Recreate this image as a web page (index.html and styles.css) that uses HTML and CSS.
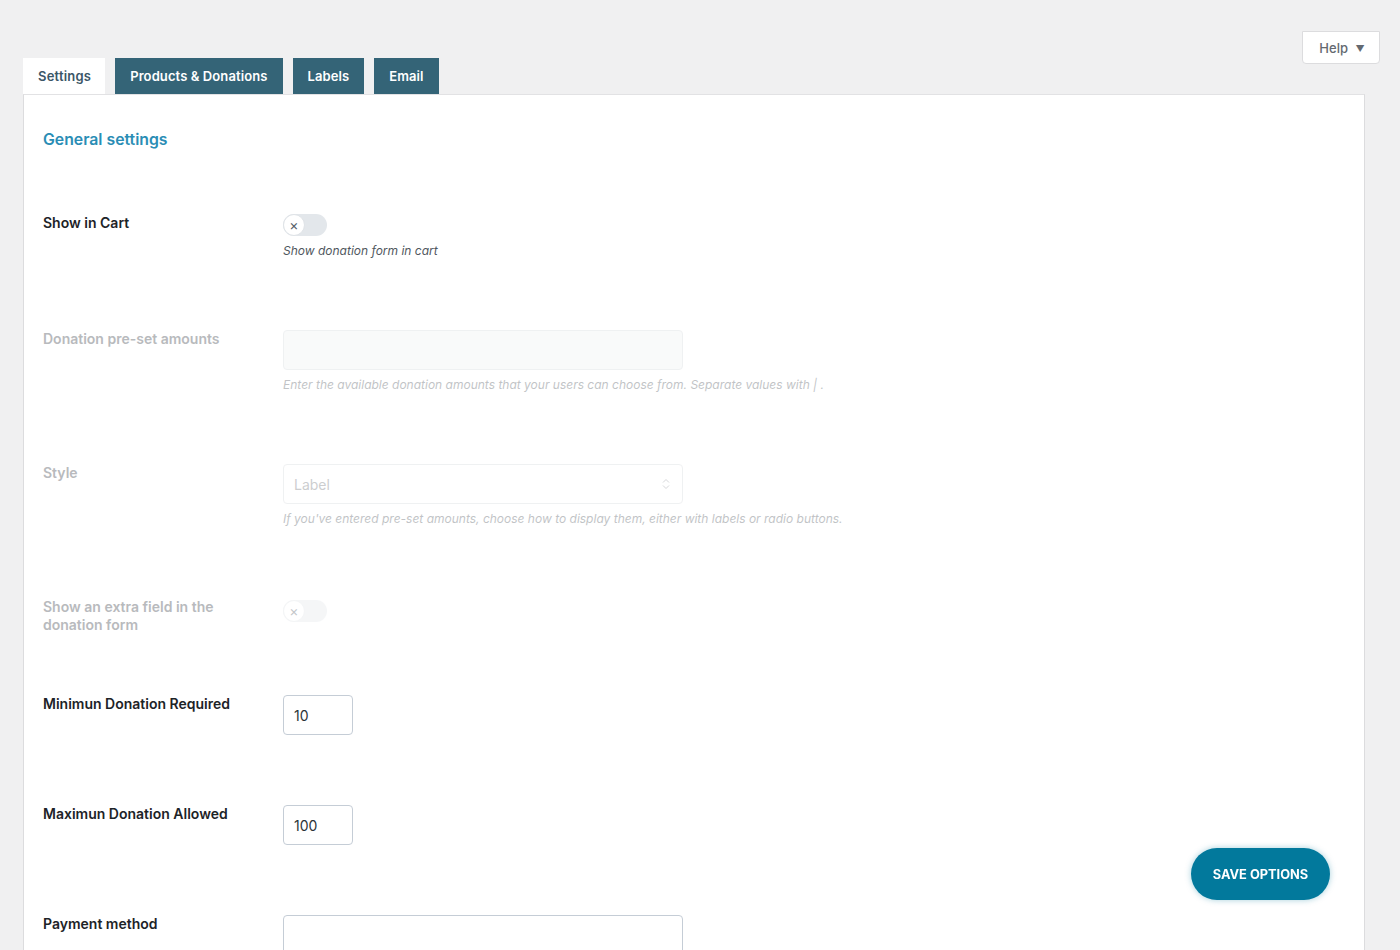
FILE: index.html
```html
<!DOCTYPE html>
<html lang="en">
<head>
    <meta charset="UTF-8">
    <meta name="viewport" content="width=device-width, initial-scale=1.0">
    <title>Donation Settings</title>
    <link rel="stylesheet" href="styles.css">
</head>
<body>
    <div class="topbar">
        <button class="help-btn">Help <span class="caret">&#9660;</span></button>
    </div>

    <div class="wrap">
        <nav class="tabs">
            <a class="tab active" href="#">Settings</a>
            <a class="tab" href="#">Products &amp; Donations</a>
            <a class="tab" href="#">Labels</a>
            <a class="tab" href="#">Email</a>
        </nav>

        <div class="panel">
            <h2 class="section-title">General settings</h2>

            <div class="row">
                <div class="label">Show in Cart</div>
                <div class="field">
                    <span class="toggle"><span class="knob">&times;</span></span>
                    <p class="desc">Show donation form in cart</p>
                </div>
            </div>

            <div class="row disabled">
                <div class="label">Donation pre-set amounts</div>
                <div class="field">
                    <input class="input wide" type="text" disabled>
                    <p class="desc">Enter the available donation amounts that your users can choose from. Separate values with | .</p>
                </div>
            </div>

            <div class="row disabled">
                <div class="label">Style</div>
                <div class="field">
                    <div class="select wide">
                        <span>Label</span>
                        <svg width="8" height="12" viewBox="0 0 8 12"><path d="M1 4.5 4 1.5 7 4.5M1 7.5 4 10.5 7 7.5" fill="none" stroke="#8c8f94" stroke-width="1"/></svg>
                    </div>
                    <p class="desc">If you've entered pre-set amounts, choose how to display them, either with labels or radio buttons.</p>
                </div>
            </div>

            <div class="row disabled tight">
                <div class="label narrow">Show an extra field in the donation form</div>
                <div class="field">
                    <span class="toggle"><span class="knob">&times;</span></span>
                </div>
            </div>

            <div class="row">
                <div class="label">Minimun Donation Required</div>
                <div class="field">
                    <input class="input small" type="text" value="10">
                </div>
            </div>

            <div class="row">
                <div class="label">Maximun Donation Allowed</div>
                <div class="field">
                    <input class="input small" type="text" value="100">
                </div>
            </div>

            <div class="row">
                <div class="label">Payment method</div>
                <div class="field">
                    <div class="input wide tall"></div>
                </div>
            </div>
        </div>
    </div>

    <button class="save-btn">SAVE OPTIONS</button>
</body>
</html>
```

FILE: styles.css
```css
body {
    margin: 0;
    background: #f0f0f1;
    font-family: 'Inter', 'Liberation Sans', sans-serif;
    color: #1d2327;
}

.topbar {
    display: flex;
    justify-content: flex-end;
    padding: 31px 20px 0 0;
    height: 27px;
}

.help-btn {
    height: 33px;
    width: 78px;
    background: #fff;
    border: 1px solid #dcdcde;
    border-radius: 0 0 4px 4px;
    font-family: inherit;
    font-size: 13px;
    font-weight: 500;
    color: #646970;
    padding: 0 0 0 2px;
    cursor: pointer;
}

.help-btn .caret {
    font-size: 9px;
    margin-left: 4px;
    position: relative;
    top: -1px;
}

.wrap {
    margin: 0 35px 0 23px;
}

/* tabs */
.tabs {
    display: flex;
    gap: 10px;
}

.tab {
    display: block;
    height: 36px;
    line-height: 36px;
    padding: 0 15px;
    font-size: 13px;
    font-weight: 600;
    letter-spacing: 0.1px;
    text-decoration: none;
    color: #fff;
    background: #346477;
}

.tab.active {
    background: #fff;
    color: #3b5667;
    padding: 0 14px 0 15px;
    letter-spacing: 0.2px;
}

.panel {
    background: #fff;
    border: 1px solid #dcdcde;
    border-top-color: #e2e2e4;
    padding: 25px 19px 40px;
    min-height: 900px;
}

.section-title {
    margin: 10px 0 30px;
    font-size: 15.8px;
    font-weight: 600;
    color: #2a8db5;
}

/* rows */
.row {
    display: flex;
    padding: 35px 0;
}

.row.tight {
    padding-bottom: 26px;
}

.row.tight .field {
    padding-top: 2px;
}

.label {
    width: 240px;
    flex-shrink: 0;
    font-size: 14px;
    font-weight: 600;
    line-height: 18px;
    color: #1d2327;
}

.label.narrow {
    width: 190px;
    margin-right: 50px;
}

.field {
    flex: 1;
}

.disabled .label {
    color: #b8babd;
}

.disabled .field {
    opacity: 0.35;
}

.desc {
    margin: 6px 0 0;
    font-size: 12px;
    line-height: 18px;
    font-style: italic;
    color: #50575e;
}

/* switch */
.toggle {
    display: block;
    width: 44px;
    height: 22px;
    border-radius: 11px;
    background: #e3e7eb;
}

.knob {
    display: flex;
    align-items: center;
    justify-content: center;
    width: 20px;
    height: 20px;
    border-radius: 50%;
    background: #fff;
    border: 1px solid #dfe3e7;
    font-size: 14px;
    color: #555d66;
    line-height: 1;
}

/* inputs */
.input {
    display: block;
    box-sizing: border-box;
    height: 40px;
    border: 1px solid #c5cdd6;
    border-radius: 4px;
    background: #fff;
    font-family: inherit;
    font-size: 14px;
    color: #2c3338;
    padding: 0 10px;
    margin: 0;
}

.disabled .input {
    background: #eef1f3;
    border-color: #d4d8dc;
}

.input.wide {
    width: 400px;
}

.input.small {
    width: 70px;
}

.input.tall {
    height: 70px;
}

.select {
    box-sizing: border-box;
    height: 40px;
    border: 1px solid #d4d8dc;
    border-radius: 4px;
    display: flex;
    align-items: center;
    justify-content: space-between;
    padding: 0 12px 0 10px;
    font-size: 14px;
    color: #6e7378;
}

.select.wide {
    width: 400px;
}

.save-btn {
    position: fixed;
    right: 70px;
    bottom: 50px;
    width: 139px;
    height: 52px;
    border: none;
    border-radius: 26px;
    background: #02799c;
    color: #fff;
    font-family: inherit;
    font-size: 12.8px;
    font-weight: 700;
    box-shadow: 0 0 6px rgba(0, 121, 156, 0.35);
    cursor: pointer;
}
```
